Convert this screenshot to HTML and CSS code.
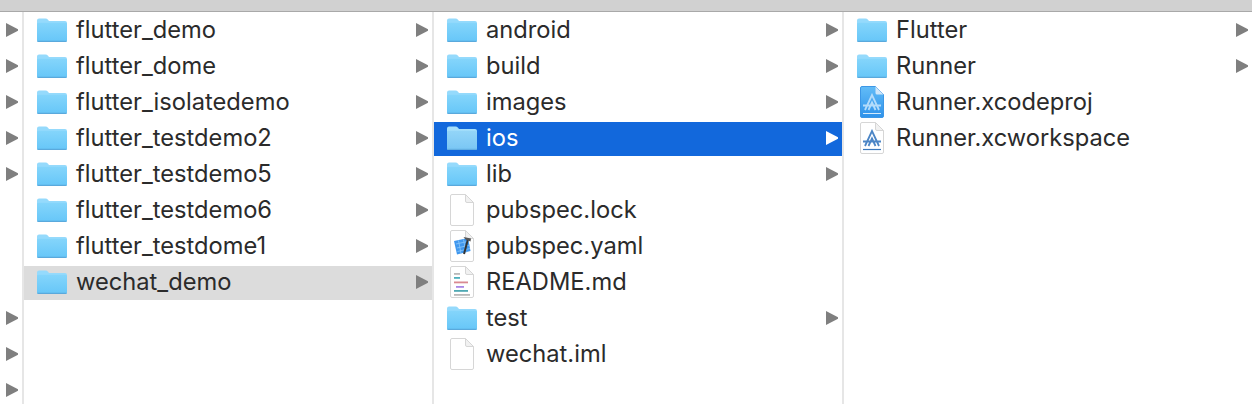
FILE: index.html
```html
<!DOCTYPE html>
<html lang="en">
<head>
<meta charset="utf-8">
<title>Finder</title>
<link rel="stylesheet" href="styles.css">
</head>
<body>
<svg class="defs" width="0" height="0" aria-hidden="true">
  <defs>
    <linearGradient id="fg" x1="0" y1="0" x2="0" y2="1"><stop offset="0" stop-color="#84d5fb"/><stop offset="1" stop-color="#66c6f8"/></linearGradient>
    <linearGradient id="fgs" x1="0" y1="0" x2="0" y2="1"><stop offset="0" stop-color="#93d5f8"/><stop offset="1" stop-color="#79c6f4"/></linearGradient>
    <linearGradient id="pg" x1="0" y1="0" x2="0" y2="1"><stop offset="0" stop-color="#62bcf7"/><stop offset="1" stop-color="#2f92ea"/></linearGradient>
    <symbol id="folder" viewBox="0 0 30 24">
      <path d="M0 2.5Q0 .5 2 .5H8.5Q10 .5 11 1.8L12 3H28Q30 3 30 5V22Q30 24 28 24H2Q0 24 0 22Z" fill="#95dafc"/>
      <path d="M0 6Q0 4.800 1.500 4.800H28.500Q30 4.800 30 6V22Q30 24 28 24H2Q0 24 0 22Z" fill="url(#fg)"/>
      <path d="M0 22.800H30V22.500Q30 24 28 24H2Q0 24 0 22.500Z" fill="#5aa9dc"/>
    </symbol>
    <symbol id="folder-sel" viewBox="0 0 30 24">
      <path d="M0 2.5Q0 .5 2 .5H8.5Q10 .5 11 1.8L12 3H28Q30 3 30 5V22Q30 24 28 24H2Q0 24 0 22Z" fill="#a5dffb"/>
      <path d="M0 6Q0 4.800 1.500 4.800H28.500Q30 4.800 30 6V22Q30 24 28 24H2Q0 24 0 22Z" fill="url(#fgs)"/>
      <path d="M0 22.800H30V22.500Q30 24 28 24H2Q0 24 0 22.500Z" fill="#62aee2"/>
    </symbol>
    <symbol id="sheet" viewBox="0 0 24 32">
      <path d="M.5 2Q.5 .5 2 .5H15.500L23.500 8.500V30Q23.500 31.500 22 31.500H2Q.5 31.500 .5 30Z" fill="#fff" stroke="#d6d6d6"/>
      <path d="M15.500 .5V7Q15.500 8.500 17 8.500H23.500Z" fill="#f1f1f1" stroke="#d6d6d6"/>
    </symbol>
    <symbol id="yaml" viewBox="0 0 24 32">
      <use href="#sheet" width="24" height="32"/>
      <path d="M4 11L18 8L20.500 21L7 24.500Z" fill="#3f97ee"/>
      <path d="M6 14L19 11.200M7 18L20 15M7.500 21.500L20 18.500M8.500 10.500L11 23.500M13.500 9.500L16 22.500" stroke="#8cc6f7" stroke-width=".8" fill="none"/>
      <path d="M14 24L18 9" stroke="#333" stroke-width="2"/>
      <path d="M13.500 7L21 8.500L20.500 11.500L15.500 9.500Z" fill="#555"/>
    </symbol>
    <symbol id="readme" viewBox="0 0 24 32">
      <use href="#sheet" width="24" height="32"/>
      <rect x="4" y="7" width="6" height="1.800" fill="#b9b9b9"/>
      <rect x="4" y="11" width="6" height="1.800" fill="#4fb0bd"/>
      <rect x="4" y="15.500" width="14" height="1.800" fill="#d98a92"/>
      <rect x="6" y="20" width="8" height="1.800" fill="#a987e6"/>
      <rect x="4" y="24" width="14" height="1.800" fill="#4fa9b3"/>
      <rect x="4" y="28" width="16" height="1.800" fill="#b9b9b9"/>
    </symbol>
    <symbol id="appglyph" viewBox="0 0 18 18">
      <path d="M2 17L9 2L16 17M0 12.500H18M5.500 17L9 9.500L12.500 17" fill="none" stroke="currentColor" stroke-width="1.800"/>
    </symbol>
    <symbol id="xcodeproj" viewBox="0 0 24 32">
      <path d="M.5 2Q.5 .5 2 .5H15.500L23.500 8.500V30Q23.500 31.500 22 31.500H2Q.5 31.500 .5 30Z" fill="url(#pg)" stroke="#3d97e6"/>
      <path d="M15.500 .5V7Q15.500 8.500 17 8.500H23.500Z" fill="#cfe6fa"/>
      <use href="#appglyph" x="3" y="7" width="18" height="18" color="#b3dcfb"/>
      <path d="M3 27.500H21" stroke="#d4ebfc" stroke-width="1"/>
    </symbol>
    <symbol id="xcworkspace" viewBox="0 0 24 32">
      <use href="#sheet" width="24" height="32"/>
      <use href="#appglyph" x="3" y="7" width="18" height="18" color="#4c86c6"/>
      <path d="M3 27.500H21" stroke="#3a78bd" stroke-width="1.200"/>
    </symbol>
  </defs>
</svg>
<div class="toolbar"></div>
<main class="browser">
  <section class="col col-tree">
    <div class="row"><i class="arrow"></i></div>
    <div class="row"><i class="arrow"></i></div>
    <div class="row"><i class="arrow"></i></div>
    <div class="row"><i class="arrow"></i></div>
    <div class="row"><i class="arrow"></i></div>
    <div class="row"></div>
    <div class="row"></div>
    <div class="row"></div>
    <div class="row"><i class="arrow"></i></div>
    <div class="row"><i class="arrow"></i></div>
    <div class="row"><i class="arrow"></i></div>
  </section>
  <section class="col">
    <div class="row"><svg class="folder"><use href="#folder"/></svg><span class="name">flutter_demo</span><i class="arrow"></i></div>
    <div class="row"><svg class="folder"><use href="#folder"/></svg><span class="name">flutter_dome</span><i class="arrow"></i></div>
    <div class="row"><svg class="folder"><use href="#folder"/></svg><span class="name">flutter_isolatedemo</span><i class="arrow"></i></div>
    <div class="row"><svg class="folder"><use href="#folder"/></svg><span class="name">flutter_testdemo2</span><i class="arrow"></i></div>
    <div class="row"><svg class="folder"><use href="#folder"/></svg><span class="name">flutter_testdemo5</span><i class="arrow"></i></div>
    <div class="row"><svg class="folder"><use href="#folder"/></svg><span class="name">flutter_testdemo6</span><i class="arrow"></i></div>
    <div class="row"><svg class="folder"><use href="#folder"/></svg><span class="name">flutter_testdome1</span><i class="arrow"></i></div>
    <div class="row row-inactive"><svg class="folder"><use href="#folder"/></svg><span class="name">wechat_demo</span><i class="arrow"></i></div>
  </section>
  <section class="col">
    <div class="row"><svg class="folder"><use href="#folder"/></svg><span class="name">android</span><i class="arrow"></i></div>
    <div class="row"><svg class="folder"><use href="#folder"/></svg><span class="name">build</span><i class="arrow"></i></div>
    <div class="row"><svg class="folder"><use href="#folder"/></svg><span class="name">images</span><i class="arrow"></i></div>
    <div class="row row-active"><svg class="folder"><use href="#folder-sel"/></svg><span class="name">ios</span><i class="arrow"></i></div>
    <div class="row"><svg class="folder"><use href="#folder"/></svg><span class="name">lib</span><i class="arrow"></i></div>
    <div class="row"><svg class="file"><use href="#sheet"/></svg><span class="name">pubspec.lock</span></div>
    <div class="row"><svg class="file"><use href="#yaml"/></svg><span class="name">pubspec.yaml</span></div>
    <div class="row"><svg class="file"><use href="#readme"/></svg><span class="name">README.md</span></div>
    <div class="row"><svg class="folder"><use href="#folder"/></svg><span class="name">test</span><i class="arrow"></i></div>
    <div class="row"><svg class="file"><use href="#sheet"/></svg><span class="name">wechat.iml</span></div>
  </section>
  <section class="col">
    <div class="row"><svg class="folder"><use href="#folder"/></svg><span class="name">Flutter</span><i class="arrow"></i></div>
    <div class="row"><svg class="folder"><use href="#folder"/></svg><span class="name">Runner</span><i class="arrow"></i></div>
    <div class="row"><svg class="file"><use href="#xcodeproj"/></svg><span class="name">Runner.xcodeproj</span></div>
    <div class="row"><svg class="file"><use href="#xcworkspace"/></svg><span class="name">Runner.xcworkspace</span></div>
  </section>
</main>
</body>
</html>
```
FILE: styles.css
```css
* { box-sizing: border-box; }
html, body { margin: 0; height: 404px; overflow: hidden; background: #fff; }
body {
  font-family: Inter, "Liberation Sans", sans-serif;
  font-size: 23.7px;
  color: #2b2b2b;
}
.defs { position: absolute; }
.toolbar { height: 12px; background: #d1d1d1; border-bottom: 1px solid #a9a9a9; }
.browser {
  display: grid;
  grid-template-columns: 22px 408px 408px 408px;
  column-gap: 2px;
  height: 392px;
  background: #e6e6e6;
}
.col {
  display: flex;
  flex-direction: column;
  gap: 2px;
  padding-top: 2px;
  background: #fff;
  overflow: hidden;
  min-width: 0;
}
.row {
  flex: none;
  height: 34px;
  display: flex;
  align-items: center;
  padding: 0 4px 0 13px;
}
.col-tree .row { padding: 0 0 0 6px; }
.folder { flex: none; width: 30px; height: 24px; margin: -2px 9px 0 0; }
.file { flex: none; width: 24px; height: 32px; margin: -2px 12px 0 3px; }
.name { flex: 1; white-space: nowrap; margin-top: -3px; }
.arrow {
  flex: none;
  width: 12px;
  height: 14px;
  margin-top: -2px;
  background: #7f7f7f;
  clip-path: polygon(0 0, 100% 44%, 100% 56%, 0 100%);
}
.row-inactive { background: #dcdcdc; }
.row-active { background: #1268dc; color: #fff; }
.row-active .arrow { background: #fff; }
```
